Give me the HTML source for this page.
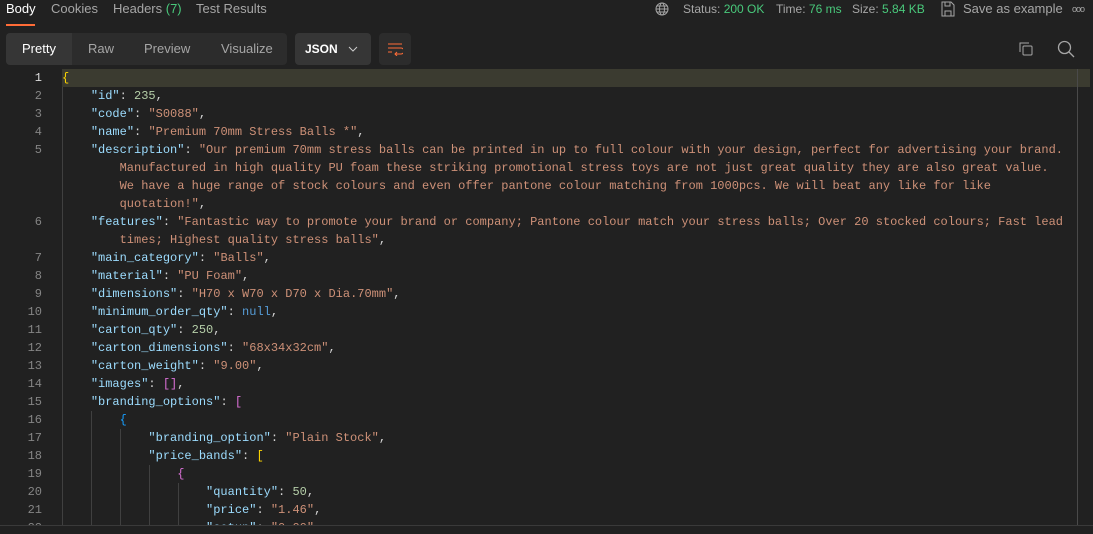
<!DOCTYPE html>
<html><head><style>
*{margin:0;padding:0;box-sizing:border-box}
body{width:1093px;height:534px;background:#212121;font-family:"Liberation Sans",sans-serif;position:relative;overflow:hidden;color:#a6a6a6}
.tab{position:absolute;top:1px;font-size:13px;color:#a6a6a6}
.btn{position:absolute;top:33px;height:32px;background:#2c2c2c;border-radius:4px}
.code{position:absolute;left:0;top:69px;font-family:"Liberation Mono",monospace;font-size:12px;line-height:18px;white-space:pre}
.ln{position:absolute;left:0;width:42px;text-align:right;color:#858585;font-family:"Liberation Mono",monospace;font-size:12px;line-height:18px;white-space:pre;height:456px;overflow:hidden}
.k{color:#9cdcfe}.s{color:#ce9178}.n{color:#b5cea8}.p{color:#d4d4d4}.b{color:#ffd700}.v{color:#569cd6}
.g{position:absolute;width:1px;background:#404040}
</style></head><body>
<div class="tab" style="left:6px;color:#fff">Body</div>
<div style="position:absolute;left:6px;top:24px;width:29px;height:2px;background:#ff6c37"></div>
<div class="tab" style="left:51px">Cookies</div>
<div class="tab" style="left:113px">Headers <span style="color:#49c97b">(7)</span></div>
<div class="tab" style="left:196px">Test Results</div>
<svg style="position:absolute;left:655px;top:2px" width="14" height="14" viewBox="0 0 14 14" fill="none" stroke="#a6a6a6"><circle cx="7" cy="7" r="6"/><ellipse cx="7" cy="7" rx="2.5" ry="6"/><path d="M1 7h12M2 4h10M2 10h10"/></svg>
<div class="tab" style="left:683px;font-size:12px;top:2px">Status: <span style="color:#49c97b">200 OK</span></div>
<div class="tab" style="left:776px;font-size:12px;top:2px">Time: <span style="color:#49c97b">76 ms</span></div>
<div class="tab" style="left:852px;font-size:12px;top:2px">Size: <span style="color:#49c97b">5.84 KB</span></div>
<svg style="position:absolute;left:941px;top:1px" width="14" height="16" viewBox="0 0 14 16" fill="none" stroke="#a6a6a6"><path d="M1 1h9l3 3v11H1z M4 1v4h5V1 M4 15v-5h6v5"/></svg>
<div class="tab" style="left:963px">Save as example</div>
<div class="tab" style="left:1072px;font-size:9px;top:4px;letter-spacing:-1px">ooo</div>

<div class="btn" style="left:6px;width:281px"></div>
<div style="position:absolute;left:6px;top:33px;width:66px;height:32px;background:#363636;border-radius:4px 0 0 4px"></div>
<div class="tab" style="left:22px;top:41px;color:#fff">Pretty</div>
<div class="tab" style="left:88px;top:41px">Raw</div>
<div class="tab" style="left:144px;top:41px">Preview</div>
<div class="tab" style="left:221px;top:41px">Visualize</div>
<div class="btn" style="left:295px;width:76px;background:#363636"></div>
<div class="tab" style="left:305px;top:42px;color:#fff;font-weight:bold;font-size:12px">JSON</div>
<svg style="position:absolute;left:348px;top:45px" width="10" height="8"><path d="M1 2l4 4 4-4" stroke="#ccc" fill="none"/></svg>
<div class="btn" style="left:379px;width:32px"></div>
<svg style="position:absolute;left:387px;top:42px" width="16" height="14" fill="none" stroke="#ff6c37"><path d="M1 2h14M1 6h13a3 3 0 0 1 0 6H8M1 10h4M10 10l-2 2 2 2"/></svg>
<svg style="position:absolute;left:1018px;top:41px" width="16" height="16" fill="none" stroke="#a6a6a6"><path d="M2 11V2h9"/><rect x="5" y="5" width="9" height="9" rx="1"/></svg>
<svg style="position:absolute;left:1057px;top:40px" width="18" height="18" fill="none" stroke="#a6a6a6" stroke-width="1.3"><circle cx="7.5" cy="7.5" r="6"/><path d="M12 12l5 5"/></svg>

<div style="position:absolute;left:62px;top:69px;width:1028px;height:18px;background:#3b3b30"></div>
<div style="position:absolute;left:1077px;top:69px;width:1px;height:456px;background:#4a4a4a"></div>
<div style="position:absolute;left:0;top:525px;width:1093px;height:1px;background:#3a3a3a"></div>
<div class="g" style="left:62px;top:87px;height:438px"></div>
<div class="g" style="left:91px;top:411px;height:114px"></div>
<div class="g" style="left:120px;top:429px;height:96px"></div>
<div class="g" style="left:149px;top:465px;height:60px"></div>
<div class="g" style="left:178px;top:483px;height:42px"></div>

<div class="ln" style="top:69px"><span style="color:#ddd">1</span>
2
3
4
5



6

7
8
9
10
11
12
13
14
15
16
17
18
19
20
21
22</div>
<div class="code" style="left:62px;height:456px;overflow:hidden"><span class="b">{</span>
    <span class="k">"id"</span><span class="p">: </span><span class="n">235</span><span class="p">,</span>
    <span class="k">"code"</span><span class="p">: </span><span class="s">"S0088"</span><span class="p">,</span>
    <span class="k">"name"</span><span class="p">: </span><span class="s">"Premium 70mm Stress Balls *"</span><span class="p">,</span>
    <span class="k">"description"</span><span class="p">: </span><span class="s">"Our premium 70mm stress balls can be printed in up to full colour with your design, perfect for advertising your brand.
        Manufactured in high quality PU foam these striking promotional stress toys are not just great quality they are also great value.
        We have a huge range of stock colours and even offer pantone colour matching from 1000pcs. We will beat any like for like
        quotation!"</span><span class="p">,</span>
    <span class="k">"features"</span><span class="p">: </span><span class="s">"Fantastic way to promote your brand or company; Pantone colour match your stress balls; Over 20 stocked colours; Fast lead
        times; Highest quality stress balls"</span><span class="p">,</span>
    <span class="k">"main_category"</span><span class="p">: </span><span class="s">"Balls"</span><span class="p">,</span>
    <span class="k">"material"</span><span class="p">: </span><span class="s">"PU Foam"</span><span class="p">,</span>
    <span class="k">"dimensions"</span><span class="p">: </span><span class="s">"H70 x W70 x D70 x Dia.70mm"</span><span class="p">,</span>
    <span class="k">"minimum_order_qty"</span><span class="p">: </span><span class="v">null</span><span class="p">,</span>
    <span class="k">"carton_qty"</span><span class="p">: </span><span class="n">250</span><span class="p">,</span>
    <span class="k">"carton_dimensions"</span><span class="p">: </span><span class="s">"68x34x32cm"</span><span class="p">,</span>
    <span class="k">"carton_weight"</span><span class="p">: </span><span class="s">"9.00"</span><span class="p">,</span>
    <span class="k">"images"</span><span class="p">: </span><span class="b" style="color:#da70d6">[]</span><span class="p">,</span>
    <span class="k">"branding_options"</span><span class="p">: </span><span class="b" style="color:#da70d6">[</span>
        <span class="b" style="color:#179fff">{</span>
            <span class="k">"branding_option"</span><span class="p">: </span><span class="s">"Plain Stock"</span><span class="p">,</span>
            <span class="k">"price_bands"</span><span class="p">: </span><span class="b">[</span>
                <span class="b" style="color:#da70d6">{</span>
                    <span class="k">"quantity"</span><span class="p">: </span><span class="n">50</span><span class="p">,</span>
                    <span class="k">"price"</span><span class="p">: </span><span class="s">"1.46"</span><span class="p">,</span>
                    <span class="k">"setup"</span><span class="p">: </span><span class="s">"0.00"</span><span class="p">,</span></div>
</body></html>
